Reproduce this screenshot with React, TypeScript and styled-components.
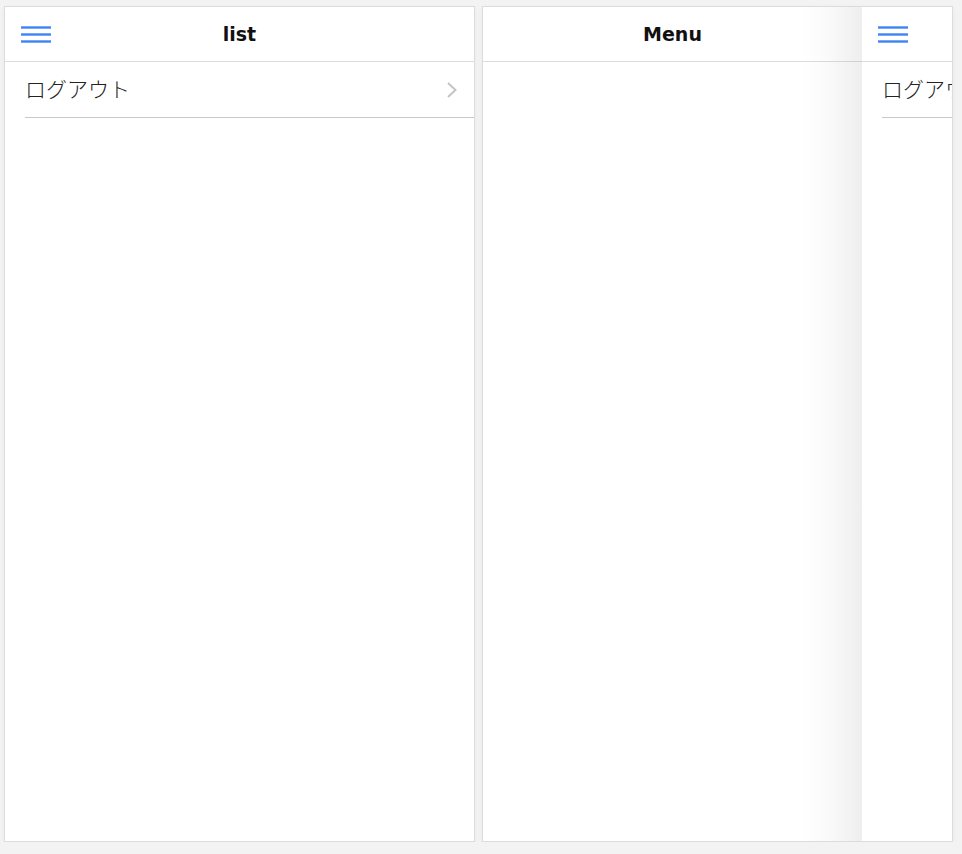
import styled, { createGlobalStyle } from "styled-components";

const GlobalStyle = createGlobalStyle`
  html, body {
    margin: 0;
    padding: 0;
    background: #f3f3f3;
  }
  body {
    font-family: "Noto Sans CJK JP", "Noto Sans", sans-serif;
  }
`;

const Stage = styled.div`
  display: flex;
  gap: 7px;
  padding: 6px 0 0 4px;
`;

const Frame = styled.div`
  position: relative;
  width: 469px;
  height: 834px;
  background: #fff;
  border: 1px solid #dcdcdc;
  overflow: hidden;
  box-shadow: 0 2px 6px rgba(0, 0, 0, 0.04);
`;

const Page = styled.div<{ $offset?: number; $width?: number }>`
  position: absolute;
  top: 0;
  bottom: 0;
  left: ${(p) => p.$offset ?? 0}px;
  width: ${(p) => p.$width ?? 469}px;
  background: #fff;

  &::before {
    content: "";
    display: ${(p) => (p.$offset ? "block" : "none")};
    position: absolute;
    top: 0;
    bottom: 0;
    left: -62px;
    width: 62px;
    background: linear-gradient(
      to right,
      rgba(0, 0, 0, 0) 0%,
      rgba(0, 0, 0, 0.015) 40%,
      rgba(0, 0, 0, 0.065) 100%
    );
  }
`;

const Header = styled.div`
  position: relative;
  height: 54px;
  display: flex;
  align-items: center;
  justify-content: center;
  border-bottom: 1px solid #dddddd;
`;

const Title = styled.div`
  font-family: "DejaVu Sans", "Noto Sans", sans-serif;
  font-weight: bold;
  font-size: 19px;
  color: #111;
`;

const MenuButton = styled.button`
  position: absolute;
  left: 16px;
  top: 19px;
  width: 30px;
  height: 17px;
  padding: 0;
  border: 0;
  background: transparent;
  display: flex;
  flex-direction: column;
  justify-content: space-between;

  span {
    display: block;
    height: 3px;
    background: #3f84f5;
    transform: scaleY(0.8);
  }
`;

const List = styled.div`
  display: flex;
  flex-direction: column;
  padding-left: 20px;
`;

const Row = styled.div`
  height: 55px;
  display: flex;
  align-items: center;
  justify-content: space-between;
  border-bottom: 1px solid #c8c8c8;
  padding-right: 16px;
`;

const RowLabel = styled.span`
  font-size: 21px;
  font-weight: 300;
  color: #222;
  white-space: nowrap;
  margin-top: -4px;
`;

const Chevron = () => (
  <svg width="12" height="18" viewBox="0 0 12 18">
    <path d="M2 2 L9.5 9 L2 16" fill="none" stroke="#c4c4c7" strokeWidth="2" />
  </svg>
);

const ListPage = ({ title = "list" }: { title?: string }) => (
  <>
    <Header>
      <MenuButton>
        <span />
        <span />
        <span />
      </MenuButton>
      {title && <Title>{title}</Title>}
    </Header>
    <List>
      <Row>
        <RowLabel>ログアウト</RowLabel>
        <Chevron />
      </Row>
    </List>
  </>
);

export default function App() {
  return (
    <>
      <GlobalStyle />
      <Stage>
        <Frame>
          <Page>
            <ListPage />
          </Page>
        </Frame>
        <Frame>
          <Page $width={379}>
            <Header>
              <Title>Menu</Title>
            </Header>
          </Page>
          <Page $offset={379}>
            <ListPage title="" />
          </Page>
        </Frame>
      </Stage>
    </>
  );
}
